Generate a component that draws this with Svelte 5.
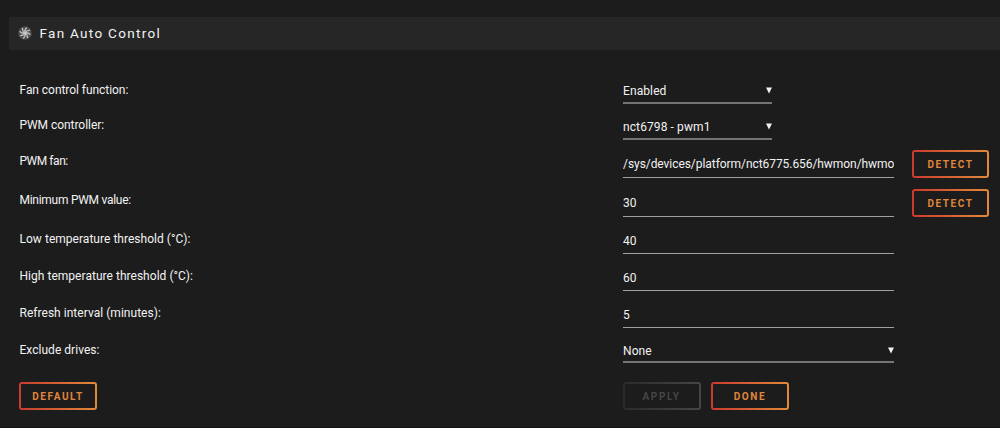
<script lang="ts">
	let rows = $state([
		{ id: 'function', label: 'Fan control function:', type: 'select', value: 'Enabled', narrow: true },
		{ id: 'controller', label: 'PWM controller:', type: 'select', value: 'nct6798 - pwm1', narrow: true },
		{ id: 'speed', label: 'PWM fan:', type: 'text', value: '/sys/devices/platform/nct6775.656/hwmon/hwmon4/fan1_input', detect: true },
		{ id: 'minimum', label: 'Minimum PWM value:', type: 'text', value: '30', detect: true },
		{ id: 'low', label: 'Low temperature threshold (°C):', type: 'text', value: '40' },
		{ id: 'high', label: 'High temperature threshold (°C):', type: 'text', value: '60' },
		{ id: 'interval', label: 'Refresh interval (minutes):', type: 'text', value: '5' },
		{ id: 'exclude', label: 'Exclude drives:', type: 'select', value: 'None' }
	]);
	const blades = [0, 45, 90, 135, 180, 225, 270, 315];
</script>

<div class="title">
	<svg class="fan" viewBox="0 0 14 14">
		<circle cx="7" cy="7" r="6.8" fill="#4c4c4c" />
		{#each blades as angle}
			<path
				d="M7 7 C6.4 5 7 3.2 8.8 1.6"
				transform="rotate({angle} 7 7)"
				fill="none"
				stroke="#bdbdbd"
				stroke-width="1.3"
			/>
		{/each}
		<circle cx="7" cy="7" r="1.6" fill="#c8c8c8" />
	</svg>
	<span>Fan Auto Control</span>
</div>

<form>
	{#each rows as row}
		<div class="row {row.id}">
			<label for={row.id}>{row.label}</label>
			<div class="field" class:narrow={row.narrow}>
				{#if row.type === 'select'}
					<select id={row.id} bind:value={row.value}>
						<option>{row.value}</option>
					</select>
					<svg class="arrow" viewBox="0 0 6 7"><path d="M0 0.5h6L3 6.5z" fill="#f2f2f2" /></svg>
				{:else}
					<input id={row.id} type="text" bind:value={row.value} />
				{/if}
			</div>
			{#if row.detect}
				<button type="button">DETECT</button>
			{/if}
		</div>
	{/each}
	<div class="actions">
		<div class="left"><button type="button">DEFAULT</button></div>
		<button type="button" disabled>APPLY</button>
		<button type="button">DONE</button>
	</div>
</form>

<style>
	:global(body) {
		background: #1c1c1c;
		color: #f2f2f2;
		font-family: Roboto, 'Liberation Sans', sans-serif;
		font-size: 12px;
		overflow: hidden;
	}

	:global(#app) {
		box-sizing: border-box;
		height: 428px;
		padding: 17px 0 0;
		border-bottom: 1px solid #151215;
	}

	.title {
		display: flex;
		align-items: center;
		box-sizing: border-box;
		height: 33px;
		margin-left: 9px;
		padding: 0 0 1px 9px;
		background: #262626;
		font-size: 13.5px;
		letter-spacing: 1.3px;
	}

	.fan {
		width: 14px;
		height: 14px;
		margin-right: 7.5px;
	}

	form {
		padding: 22px 0 0 19.5px;
	}

	.row {
		display: flex;
		align-items: flex-start;
		height: 37px;
	}

	label {
		width: 603.5px;
		height: 36px;
		line-height: 36px;
		letter-spacing: 0.03px;
	}

	.field {
		display: flex;
		align-items: center;
		box-sizing: border-box;
		width: 271px;
		height: 33px;
		padding-top: 8px;
		border-bottom: 1px solid #a0a0a0;
	}

	.function {
		height: 36px;
	}

	.controller {
		height: 35px;
	}

	.speed,
	.minimum {
		height: 39px;
	}

	.speed .field,
	.minimum .field {
		height: 35px;
		padding-top: 8px;
	}

	.function label,
	.controller label {
		letter-spacing: -0.05px;
	}

	.controller label {
		line-height: 35px;
	}

	.speed label {
		letter-spacing: -0.45px;
	}

	.minimum label {
		letter-spacing: -0.27px;
	}

	.function .field,
	.controller .field,
	.exclude .field {
		height: 32px;
		padding-top: 7px;
		border-bottom: 2px solid #747474;
	}

	.exclude .field {
		height: 31px;
		padding-top: 8px;
	}

	.field.narrow {
		width: 149px;
	}

	input,
	select {
		flex: 1;
		min-width: 0;
		height: 20px;
		margin: 0;
		padding: 0;
		border: none;
		outline: none;
		appearance: none;
		background: none;
		color: #f2f2f2;
		font: inherit;
		letter-spacing: 0.1px;
	}

	.speed input {
		letter-spacing: -0.06px;
	}

	.arrow {
		width: 6px;
		height: 7px;
	}

	button {
		box-sizing: border-box;
		width: 78px;
		height: 28px;
		padding: 0;
		border: 2px solid transparent;
		border-radius: 3px;
		background:
			linear-gradient(#1c1c1c, #1c1c1c) padding-box,
			linear-gradient(90deg, #cc3a2e, #e08a3a) border-box;
		color: #e0863c;
		font: bold 10px Roboto, 'Liberation Sans', sans-serif;
		letter-spacing: 1.6px;
	}

	button:disabled {
		background:
			linear-gradient(#1c1c1c, #1c1c1c) padding-box,
			linear-gradient(90deg, #2a2a2a, #464646) border-box;
		color: #464646;
	}

	.row button {
		width: 77px;
		margin: 7px 0 0 18px;
	}

	.actions {
		display: flex;
		gap: 10.5px;
		padding-top: 13px;
		margin-left: -0.5px;
	}

	.left {
		width: 593px;
	}
</style>
